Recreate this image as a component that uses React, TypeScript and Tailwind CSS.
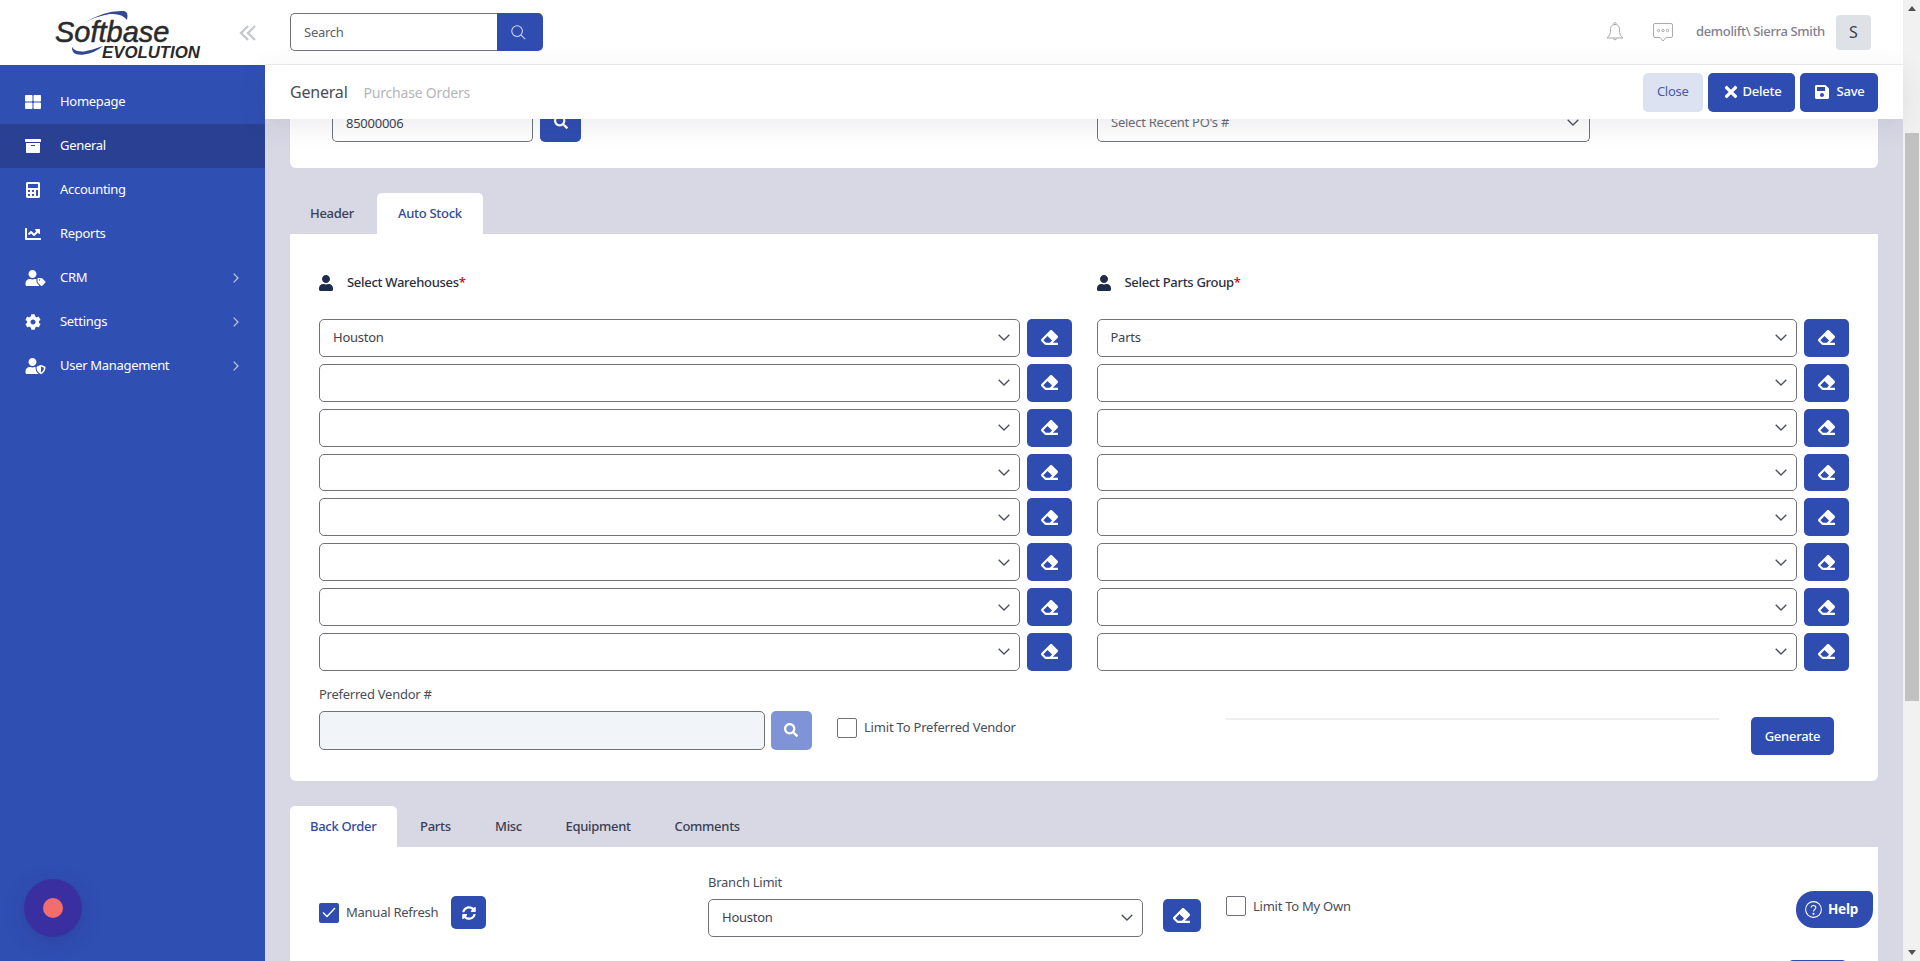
import React from "react";
import { FaThLarge, FaArchive, FaCalculator, FaChartLine, FaUserTag, FaCog, FaUserShield, FaUser, FaSearch, FaEraser, FaTimes, FaSave, FaSyncAlt } from "react-icons/fa";

const Chevron = () => (
  <svg width="12" height="7" viewBox="0 0 12 7" fill="none" stroke="#4b4f5c" strokeWidth="1.3" className="shrink-0">
    <path d="M0.7 0.7 L6 6 L11.3 0.7" />
  </svg>
);

const Select = ({ value, className = "" }: { value?: string; className?: string }) => (
  <div className={`flex items-center justify-between border border-[#6f7379] rounded-[5px] bg-white pl-[13px] pr-[9px] text-[13px] text-[#3f424d] ${className}`}>
    <span>{value}</span>
    <Chevron />
  </div>
);

const Eraser = ({ className = "" }: { className?: string }) => (
  <button className={`flex items-center justify-center bg-[#2f4cb0] rounded-[5px] text-white text-[17px] shrink-0 ${className}`}>
    <FaEraser />
  </button>
);

const Row = ({ value }: { value?: string }) => (
  <div className="flex gap-[7px] h-[37.86px]">
    <Select value={value} className="flex-1 min-w-0" />
    <Eraser className="w-[45px]" />
  </div>
);

const Column = ({ title, first }: { title: string; first: string }) => (
  <div>
    <div className="flex items-center h-6 mb-[24px] gap-[14px] text-[13px] font-medium tracking-[-0.3px] text-[#2b2f3e]">
      <FaUser className="text-[14px] text-[#1f2d4d] w-[14px] h-[16px]" />
      <span>
        {title}
        <span className="text-[#d8000c]">*</span>
      </span>
    </div>
    <div className="flex flex-col gap-[7px]">
      <Row value={first} />
      {[0, 1, 2, 3, 4, 5, 6].map((i) => (
        <Row key={i} />
      ))}
    </div>
  </div>
);

const Tab = ({ label, active, className = "" }: { label: string; active?: boolean; className?: string }) => (
  <div
    className={`flex items-center h-[41px] rounded-t-[5px] text-[13px] font-medium tracking-[-0.3px] ${
      active ? "bg-white text-[#2f4a9f]" : "text-[#3a3e52]"
    } ${className}`}
  >
    {label}
  </div>
);

const menu = [
  { label: "Homepage", icon: <FaThLarge /> },
  { label: "General", icon: <FaArchive />, active: true },
  { label: "Accounting", icon: <FaCalculator /> },
  { label: "Reports", icon: <FaChartLine /> },
  { label: "CRM", icon: <FaUserTag className="w-[21px]" />, arrow: true },
  { label: "Settings", icon: <FaCog />, arrow: true },
  { label: "User Management", icon: <FaUserShield className="w-[21px]" />, arrow: true },
];

export default function App() {
  return (
    <div className="relative flex h-screen w-full overflow-hidden bg-[#d7d8e4] font-['Noto_Sans',sans-serif] tracking-[-0.25px]">
      <aside className="relative flex flex-col w-[265px] shrink-0">
        <div className="relative h-[65px] bg-white pl-[55px] pt-[21px]">
          <div className="font-['Liberation_Sans',sans-serif] italic text-[#2a2a2c] text-[29px] leading-[22px] tracking-[0px] [-webkit-text-stroke:0.5px_#2a2a2c]">Softbase</div>
          <div className="font-['Liberation_Sans',sans-serif] italic font-bold text-[#2a2a2c] text-[16.8px] leading-[16px] mt-[1.6px] ml-[47px] tracking-[0px]">EVOLUTION</div>
          <svg className="absolute left-0 top-0" width="265" height="65" viewBox="0 0 265 65">
            <path d="M82 24 Q104 10 124 11 Q129 12 127 20 Q122 13 110 14 Q96 16 82 24Z" fill="#34488f" />
            <path d="M72 47 Q71 56 84 54.5 Q95 53 103 46 Q92 50 84 51.5 Q75 52 72 47Z" fill="#34488f" />
            <path d="M248 26 L241 33 L248 40 M255 26 L248 33 L255 40" fill="none" stroke="#c6c8ce" strokeWidth="2.4" />
          </svg>
        </div>
        <nav className="flex-1 bg-[#304fb3] pt-[15px]">
          {menu.map((m) => (
            <div
              key={m.label}
              className={`flex items-center h-[44px] pl-[25px] pr-[26px] text-[13px] tracking-[-0.3px] text-white ${m.active ? "bg-[#2a4193]" : ""}`}
            >
              <span className="w-[35px] text-[16px] flex items-center">{m.icon}</span>
              <span className="flex-1">{m.label}</span>
              {m.arrow && (
                <svg width="6" height="10" viewBox="0 0 6 10" fill="none" stroke="#c3cbe8" strokeWidth="1.2">
                  <path d="M0.7 0.7 L5 5 L0.7 9.3" />
                </svg>
              )}
            </div>
          ))}
        </nav>
        <div className="absolute left-[24px] bottom-[24px] w-[58px] h-[58px] rounded-full bg-[#3a2fa0] flex items-center justify-center shadow-[0_4px_20px_rgba(40,40,120,0.3)]">
          <div className="w-[20px] h-[20px] rounded-full bg-[#f26d6d]" />
        </div>
      </aside>

      <main className="flex flex-col flex-1 min-w-0">
        <header className="flex items-center h-[65px] bg-white border-b border-[#eeeeee] pl-[25px] pr-[32.5px]">
          <div className="flex h-[38px]">
            <div className="flex items-center w-[207px] border border-[#6f7379] border-r-0 rounded-l-[5px] pl-[13px] pt-[1px] text-[13px] text-[#5d606b]">Search</div>
            <button className="flex items-center justify-center w-[45.5px] bg-[#2f4cb0] rounded-r-[5px]">
              <svg width="15" height="15" viewBox="0 0 16 16" fill="none" stroke="#d7ddf2" strokeWidth="1.1" className="-ml-[3px]">
                <circle cx="6.5" cy="6.5" r="5.7" />
                <path d="M10.8 10.8 L15.2 15.2" />
              </svg>
            </button>
          </div>
          <div className="flex-1" />
          <svg width="18" height="20" viewBox="0 0 18 20" fill="none" stroke="#a0a1a6" strokeWidth="0.9" className="mr-[29px]">
            <path d="M9 2.5 C5.5 2.5 4.5 5 4.5 8 C4.5 12 3.5 14 1 16 H17 C14.5 14 13.5 12 13.5 8 C13.5 5 12.5 2.5 9 2.5Z" />
            <circle cx="9" cy="1.6" r="1.1" />
            <path d="M7 16.5 Q9 19.5 11 16.5" />
          </svg>
          <svg width="20" height="19" viewBox="0 0 20 19" fill="none" stroke="#a0a1a6" strokeWidth="0.9" className="mr-[23px]">
            <path d="M2 0.5 H18 Q19.5 0.5 19.5 2 V13 Q19.5 14.5 18 14.5 H13 L10 18 L7 14.5 H2 Q0.5 14.5 0.5 13 V2 Q0.5 0.5 2 0.5Z" />
            <circle cx="5.5" cy="7.5" r="1.2" />
            <circle cx="10" cy="7.5" r="1.2" />
            <circle cx="14.5" cy="7.5" r="1.2" />
          </svg>
          <span className="text-[13px] font-medium tracking-[-0.35px] text-[#7f808f] mr-[11px] whitespace-nowrap">demolift\ Sierra Smith</span>
          <div className="flex items-center justify-center w-[34.6px] h-[35px] rounded-[4px] bg-[#dee2e6] text-[16px] text-[#3a3e4a]">S</div>
        </header>

        <div className="relative z-10 flex items-center h-[54px] bg-white pl-[25px] pr-[25px] shadow-[0_6px_28px_rgba(60,60,90,0.10)]">
          <span className="text-[16px] tracking-[-0.2px] text-[#4a4d59] mr-[16px]">General</span>
          <span className="text-[14px] tracking-[-0.2px] text-[#b5b6bb]">Purchase Orders</span>
          <div className="flex-1" />
          <div className="flex gap-[5px] h-[39px] text-[13px]">
            <button className="w-[60.5px] rounded-[5px] bg-[#dde2f3] text-[#4a5ba8]">Close</button>
            <button className="flex items-center justify-center gap-[3px] w-[87px] rounded-[5px] bg-[#2f4cb0] text-white font-medium">
              <FaTimes className="text-[18px]" />
              Delete
            </button>
            <button className="flex items-center justify-center gap-[7px] w-[78px] rounded-[5px] bg-[#2f4cb0] text-white font-medium">
              <FaSave className="text-[16px]" />
              Save
            </button>
          </div>
        </div>

        <div className="flex flex-col flex-1 min-h-0 px-[25px]">
          <div className="relative grid grid-cols-2 h-[49px] shrink-0 bg-white rounded-b-[6px]">
            <div className="flex items-start gap-[7px] h-[23px] pl-[42px]">
              <div className="flex items-end w-[201px] h-[23px] border border-t-0 border-[#6f7379] rounded-b-[5px] pl-[13px] pb-[11px] text-[13px] leading-[13px] text-[#3f424d]">85000006</div>
              <button className="flex items-end justify-center w-[41px] h-[23px] bg-[#2f4cb0] rounded-b-[5px] pb-[13px] text-white text-[14px] overflow-hidden">
                <FaSearch />
              </button>
            </div>
            <div className="flex items-start justify-between h-[23px] w-[493px] ml-[13px] border border-t-0 border-[#6f7379] rounded-b-[5px] pl-[13px] pr-[10px] text-[13px] leading-[13px] text-[#6a6d77]">
              <span className="mt-[-3px]">Select Recent PO's #</span>
              <span className="mt-[0px]"><Chevron /></span>
            </div>
          </div>

          <div className="flex mt-[25px] shrink-0">
            <Tab label="Header" className="pl-[20px] w-[87px]" />
            <Tab label="Auto Stock" active className="pl-[21px] w-[106px]" />
          </div>

          <section className="bg-white rounded-b-[6px] h-[547px] shrink-0 px-[29px] pt-[37px]">
            <div className="grid grid-cols-2 gap-x-[25px]">
              <Column title="Select Warehouses" first="Houston" />
              <Column title="Select Parts Group" first="Parts" />
            </div>
            <div className="grid grid-cols-2 gap-x-[25px] mt-[13px]">
              <div>
                <div className="h-5 leading-5 text-[13px] text-[#4a4d59]">Preferred Vendor #</div>
                <div className="flex items-center mt-[7px]">
                  <div className="w-[445.5px] h-[39px] border border-[#6f7379] rounded-[5px] bg-[#f1f4f8]" />
                  <button className="flex items-center justify-center w-[40.5px] h-[39px] ml-[6.5px] rounded-[5px] bg-[#7f94d6] text-white text-[14px]">
                    <FaSearch />
                  </button>
                  <div className="w-[20px] h-[20px] ml-[25.5px] -mt-[5px] border border-[#6f7379] rounded-[2px] bg-white" />
                  <span className="ml-[7px] -mt-[5px] text-[13px] tracking-[-0.2px] text-[#4a4d59]">Limit To Preferred Vendor</span>
                </div>
              </div>
              <div className="flex pl-[129.5px]">
                <div className="w-[493px] h-[2px] mt-[34px] bg-[#eeeeee]" />
                <button className="w-[83px] h-[38px] mt-[33.5px] ml-[32px] rounded-[5px] bg-[#2f4cb0] text-white text-[13px] font-medium">Generate</button>
              </div>
            </div>
          </section>

          <div className="flex mt-[25px] shrink-0">
            <Tab label="Back Order" active className="pl-[20px] w-[107px]" />
            <Tab label="Parts" className="ml-[23px] w-[75px]" />
            <Tab label="Misc" className="w-[70.5px]" />
            <Tab label="Equipment" className="w-[109px]" />
            <Tab label="Comments" />
          </div>

          <section className="flex flex-1 min-h-0 items-start overflow-hidden bg-white pl-[29px]">
            <div className="flex items-center w-[167px] h-[33px] mt-[49px] shrink-0">
              <div className="flex items-center justify-center w-[20px] h-[20px] rounded-[2px] bg-[#2f4cb0]">
                <svg width="14" height="11" viewBox="0 0 14 11" fill="none" stroke="#fff" strokeWidth="1.4">
                  <path d="M1 5.5 L5 9.5 L13 1" />
                </svg>
              </div>
              <span className="ml-[7px] text-[13px] text-[#4a4d59] whitespace-nowrap">Manual Refresh</span>
              <button className="flex items-center justify-center w-[35px] h-[33px] ml-auto rounded-[5px] bg-[#2f4cb0] text-white text-[14px] shrink-0">
                <FaSyncAlt />
              </button>
            </div>
            <div className="w-[434.5px] ml-[222px] mt-[25px] shrink-0">
              <div className="h-5 leading-5 text-[13px] text-[#4a4d59]">Branch Limit</div>
              <Select value="Houston" className="h-[37.7px] mt-[7px]" />
            </div>
            <Eraser className="w-[37.5px] h-[33px] ml-[20.5px] mt-[52px]" />
            <div className="w-[20px] h-[20px] ml-[25.5px] mt-[49px] border border-[#6f7379] rounded-[2px] bg-white shrink-0" />
            <span className="ml-[7px] mt-[50px] text-[13px] text-[#4a4d59]">Limit To My Own</span>
            <div className="w-[59px] h-[38px] ml-auto mr-[31px] mt-[113px] rounded-[5px] bg-[#2f4cb0] shrink-0" />
          </section>
        </div>
      </main>

      <div className="flex flex-col items-center w-[17px] shrink-0 bg-[#f1f1f1]">
        <div className="flex items-center justify-center h-[17px]">
          <div className="w-0 h-0 border-x-[4px] border-x-transparent border-b-[5px] border-b-[#505050]" />
        </div>
        <div className="w-[14px] h-[568px] mt-[116px] bg-[#c1c1c1]" />
        <div className="flex-1" />
        <div className="flex items-center justify-center h-[17px]">
          <div className="w-0 h-0 border-x-[4px] border-x-transparent border-t-[5px] border-t-[#505050]" />
        </div>
      </div>

      <button className="absolute right-[47px] bottom-[33px] flex items-center gap-[6px] w-[77px] h-[37px] pl-[9px] rounded-l-[18px] rounded-tr-[5px] rounded-br-[18px] bg-[#2f4cb0] text-white text-[13.5px] font-bold">
        <svg width="17" height="17" viewBox="0 0 16 16" fill="none" stroke="#fff" strokeWidth="1">
          <circle cx="8" cy="8" r="7.4" />
          <path d="M5.8 6.2 C5.8 3.6 10.2 3.6 10.2 6.2 C10.2 8 8 8 8 9.8" />
          <circle cx="8" cy="12" r="0.5" fill="#fff" />
        </svg>
        Help
      </button>
    </div>
  );
}
